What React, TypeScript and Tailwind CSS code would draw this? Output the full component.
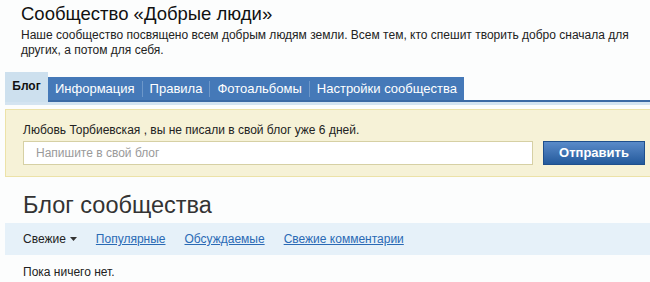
import { useState } from 'react';

const TABS = ['Информация', 'Правила', 'Фотоальбомы', 'Настройки сообщества'];

const FILTERS = ['Популярные', 'Обсуждаемые', 'Свежие комментарии'];

export default function App() {
  const [text, setText] = useState('');

  return (
    <div className="w-[650px] h-[282px] overflow-hidden bg-[#fcfdfd] text-[#222] font-['Liberation_Sans',Arial,sans-serif]">
      {/* Шапка сообщества */}
      <div className="pl-[21px] pt-[1px]">
        <h1 className="text-[18.5px] leading-[26px] text-[#111]">Сообщество «Добрые люди»</h1>
        <p className="mt-[1px] text-[12px] leading-[15px] text-[#222] whitespace-nowrap">
          Наше сообщество посвящено всем добрым людям земли. Всем тем, кто спешит творить добро сначала для
          <br />
          других, а потом для себя.
        </p>
      </div>

      {/* Вкладки */}
      <div className="mt-[14px] ml-[5px]">
        <div className="flex items-end h-[28px]">
          <div className="h-[28px] w-[43px] flex items-center justify-center bg-[#cde0ee] text-[12px] font-bold text-[#111]">
            Блог
          </div>
          <div className="flex items-center h-[23px] bg-[#4579b8]">
            {TABS.map((tab, i) => (
              <div key={tab} className="flex items-center">
                {i > 0 && <span className="w-px h-[16px] bg-[#6d97c9]" />}
                <span className="px-[7px] text-[13px] text-white">{tab}</span>
              </div>
            ))}
          </div>
        </div>
        <div className="flex h-[2px]">
          <div className="w-[43px] bg-[#cde0ee]" />
          <div className="flex-1 bg-[#3b6aa5]" />
        </div>
        <div className="h-[3px] bg-[#d4e4f1]" />
      </div>

      {/* Напоминание */}
      <div className="mt-[4px] ml-[5px] h-[68px] bg-[#f6f2d7] border border-[#ece2a8] border-r-0 pl-[17px] pr-[5px] pt-[13px]">
        <div className="text-[12px] leading-[15px] text-[#222]">
          Любовь Торбиевская , вы не писали в свой блог уже 6 дней.
        </div>
        <div className="mt-[3px] flex items-center gap-[10px]">
          <input
            value={text}
            onChange={(e) => setText(e.target.value)}
            placeholder="Напишите в свой блог"
            className="w-[510px] h-[24px] px-[12px] bg-white border border-[#d6d0a4] text-[12px] placeholder-[#9a9a9a] outline-none"
          />
          <button className="w-[102px] h-[24px] bg-gradient-to-b from-[#5a8bc9] to-[#235a9c] border border-[#1f4f8c] text-white text-[13px] font-bold">
            Отправить
          </button>
        </div>
      </div>

      {/* Блог сообщества */}
      <h2 className="mt-[14px] pl-[23px] text-[23.5px] leading-[28px] text-[#333]">Блог сообщества</h2>

      <div className="mt-[4px] ml-[5px] h-[32px] bg-[#e6f1f9] flex items-center pl-[18px] text-[12px]">
        <span className="flex items-center gap-[4px] text-[#222]">
          Свежие
          <svg width="7" height="4" viewBox="0 0 7 4">
            <path d="M0 0h7L3.5 4z" fill="#333" />
          </svg>
        </span>
        {FILTERS.map((f) => (
          <a key={f} href="#" className="ml-[19px] text-[#2a6ab5] underline">
            {f}
          </a>
        ))}
      </div>

      <div className="pl-[23px] pt-[9px] text-[12px] leading-[16px] text-[#222]">Пока ничего нет.</div>
    </div>
  );
}
